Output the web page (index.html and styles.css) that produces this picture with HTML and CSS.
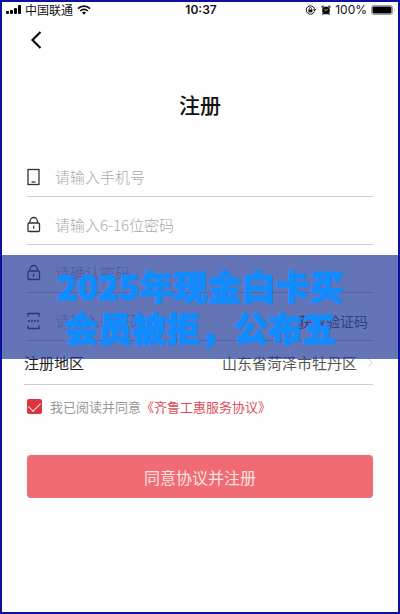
FILE: index.html
```
<!DOCTYPE html>
<html lang="zh-CN">
<head>
    <meta charset="UTF-8">
    <meta name="viewport" content="width=device-width, initial-scale=1.0">
    <title>注册</title>
    <link rel="stylesheet" href="styles.css">
</head>
<body>
    <div class="page">
        <!-- 状态栏 -->
        <div class="status">
            <div class="status-left">
                <svg width="16" height="10" viewBox="0 0 16 10">
                    <rect x="0" y="6" width="3" height="3" rx="1"/>
                    <rect x="4" y="5" width="3" height="4" rx="1"/>
                    <rect x="8" y="3" width="3" height="6" rx="1"/>
                    <rect x="12" y="0" width="3" height="9" rx="1"/>
                </svg>
                <span>中国联通</span>
                <svg class="wifi" width="14" height="10" viewBox="0 0 14 10" fill="none" stroke="#111" stroke-width="1.7">
                    <path d="M1 3.6C4.400 .2 9.600 .2 13 3.600M3.200 6C5.400 3.800 8.600 3.800 10.800 6"/>
                    <path d="M7 9.800L4.900 7.600C6 6.500 8 6.500 9.100 7.600z" fill="#111" stroke="none"/>
                </svg>
            </div>
            <span class="time">10:37</span>
            <div class="status-right">
                <svg width="12" height="10" viewBox="0 0 12 10" fill="none" stroke="#111">
                    <path d="M9.300 6.700A4.200 4.200 0 1 1 9.400 3.600"/>
                    <path d="M7.800 4.200h3.400L9.500 6.400z" fill="#111" stroke="none"/>
                    <rect x="3.400" y="4.500" width="4" height="2.800" fill="#111" stroke="none"/>
                    <path d="M4.300 4.700V3.600a1.100 1.100 0 0 1 2.200 0v1.100" stroke-width=".8"/>
                </svg>
                <svg width="10" height="10" viewBox="0 0 10 10" fill="none" stroke="#111">
                    <circle cx="5" cy="5.400" r="3.900" fill="#111" stroke="none"/>
                    <path d="M.6 2.400L2.500 .8M9.400 2.400L7.500 .8M2.400 8.400L1.500 9.600M7.600 8.400L8.500 9.600" stroke-width="1.300"/>
                    <path d="M3.600 4.200L5 5.600L6.600 4" stroke="#fff" stroke-width=".7"/>
                </svg>
                <span>100%</span>
                <svg width="25" height="10" viewBox="0 0 25 10">
                    <rect x=".5" y=".5" width="21" height="9" rx="2" fill="none" stroke="#999"/>
                    <rect x="1.500" y="1.500" width="19" height="7" rx="1"/>
                    <path d="M23 3.500q1.500 1.500 0 3z" fill="#888"/>
                </svg>
            </div>
        </div>

        <button class="back" type="button" aria-label="返回">
            <svg width="12" height="20" viewBox="0 0 12 20" fill="none" stroke="#111" stroke-width="2.200">
                <path d="M10.500 2L2.500 10l8 8"/>
            </svg>
        </button>

        <h1 class="title">注册</h1>

        <!-- 注册表单 -->
        <form class="form">
            <div class="row">
                <svg class="icon" width="14" height="18" viewBox="0 0 14 18" fill="none" stroke="#333" stroke-width="1.300">
                    <rect x="1" y="1.500" width="11" height="15"/>
                    <path d="M4.500 14h4"/>
                </svg>
                <input type="tel" aria-label="手机号" placeholder="请输入手机号">
            </div>
            <div class="row">
                <svg class="icon" width="14" height="18" viewBox="0 0 14 18" fill="none" stroke="#333" stroke-width="1.300">
                    <rect x="1" y="7" width="11.500" height="8.500" rx="1"/>
                    <path d="M3 7V5.200a3.700 3.700 0 0 1 7.400 0V7M6.700 9.800v3"/>
                </svg>
                <input type="password" aria-label="密码" placeholder="请输入6-16位密码">
            </div>
            <div class="row">
                <svg class="icon" width="14" height="18" viewBox="0 0 14 18" fill="none" stroke="#333" stroke-width="1.300">
                    <rect x="1" y="7" width="11.500" height="8.500" rx="1"/>
                    <path d="M3 7V5.200a3.700 3.700 0 0 1 7.400 0V7M6.700 9.800v3"/>
                </svg>
                <input type="password" aria-label="确认密码" placeholder="请确认密码">
            </div>
            <div class="row">
                <svg class="icon" width="14" height="18" viewBox="0 0 14 18" fill="none" stroke="#333" stroke-width="1.300">
                    <path d="M1 4.500V1.500h11v3M1 13.500v3h11v-3"/>
                    <path d="M1 9h11" stroke-width="1.500" stroke-dasharray="2 1"/>
                </svg>
                <input type="text" aria-label="验证码" placeholder="请输入验证码">
                <button class="code" type="button">获取验证码</button>
            </div>
            <button class="row region" type="button">
                <span>注册地区</span>
                <span class="place">山东省菏泽市牡丹区</span>
                <svg width="5" height="9" viewBox="0 0 5 9" fill="none" stroke="#ccc">
                    <path d="M.5 .5l3.500 4l-3.500 4"/>
                </svg>
            </button>
            <div class="agree">
                <input type="checkbox" id="agree" checked>
                <label for="agree">我已阅读并同意</label>
                <a href="#">《齐鲁工惠服务协议》</a>
            </div>
            <button class="submit" type="submit">同意协议并注册</button>
        </form>

        <!-- 标题横幅 -->
        <div class="banner">2025年现金白卡买<br>会员被拒，公布五</div>
    </div>
</body>
</html>
```
FILE: styles.css
```
*{
    box-sizing: border-box;
}
body{
    margin: 0;
    font-family: "Noto Sans CJK SC", sans-serif;
    color: #222;
}
button, input{
    font: inherit;
    color: inherit;
    background: none;
    border: none;
    padding: 0;
}
svg{
    display: block;
    flex: none;
}
.page{
    position: relative;
    min-height: 100vh;
    border: 2px solid #1010a0;
    background-color: #fefefe;
}

/* 状态栏 */
.status{
    display: grid;
    grid-template-columns: 1fr auto 1fr;
    align-items: center;
    height: 16px;
    padding: 0 2px 0 4px;
    font-size: 12px;
    line-height: 16px;
    color: #111;
}
.status-left, .status-right{
    display: flex;
    align-items: center;
    gap: 3px;
}
.status-right{
    justify-content: flex-end;
    gap: 4px;
    font-family: Inter, sans-serif;
}
.wifi{
    margin-left: 1px;
}
.time{
    font-family: Inter, sans-serif;
    font-weight: 600;
}

.back{
    display: block;
    margin: 12px 0 0 28px;
}
.title{
    margin: 39px 0 30px;
    font-size: 21px;
    line-height: 30px;
    font-weight: 500;
    text-align: center;
    color: #111;
}

/* 表单 */
.form{
    padding: 0 25px;
}
.row{
    display: flex;
    align-items: center;
    width: 100%;
    height: 48px;
    padding-top: 8px;
    border-bottom: 1px solid #ccc;
    font-size: 15px;
}
.row input{
    flex: 1;
    min-width: 0;
    margin-left: 14px;
    font-weight: 300;
    outline: none;
}
.row input::placeholder{
    color: #aaa;
    opacity: 1;
}
.code{
    padding-right: 5px;
    font-size: 14px;
    color: #555;
}
.region{
    width: calc(100% + 3px);
    height: 44px;
    margin-left: -3px;
    padding-top: 0;
    text-align: left;
}
.place{
    margin-left: auto;
    margin-right: 11px;
    color: #555;
}
.agree{
    display: flex;
    align-items: center;
    height: 42px;
    font-size: 13px;
    color: #999;
}
.agree input{
    appearance: none;
    width: 15px;
    height: 15px;
    margin: 0 8px 0 0;
    border-radius: 2px;
    background-color: #d9363e;
}
.agree input:checked::before{
    content: "";
    display: block;
    width: 10px;
    height: 6px;
    margin: 3px auto 0;
    border: solid #fff;
    border-width: 0 0 1px 1px;
    transform: rotate(-45deg);
}
.agree a{
    color: #d8505c;
    text-decoration: none;
}
.submit{
    display: block;
    width: 100%;
    height: 43px;
    margin-top: 28px;
    border-radius: 4px;
    background-color: #f06b73;
    font-size: 16px;
    color: #fde3e1;
}

/* 横幅盖在表单上面 */
.banner{
    position: absolute;
    top: 253px;
    left: 0;
    right: 0;
    padding: 10px 0;
    background-color: rgba(33, 59, 153, 0.7);
    font-size: 34px;
    line-height: 42px;
    font-weight: 900;
    text-align: center;
    color: #108cff;
    -webkit-text-stroke: 1px #108cff;
}
```
